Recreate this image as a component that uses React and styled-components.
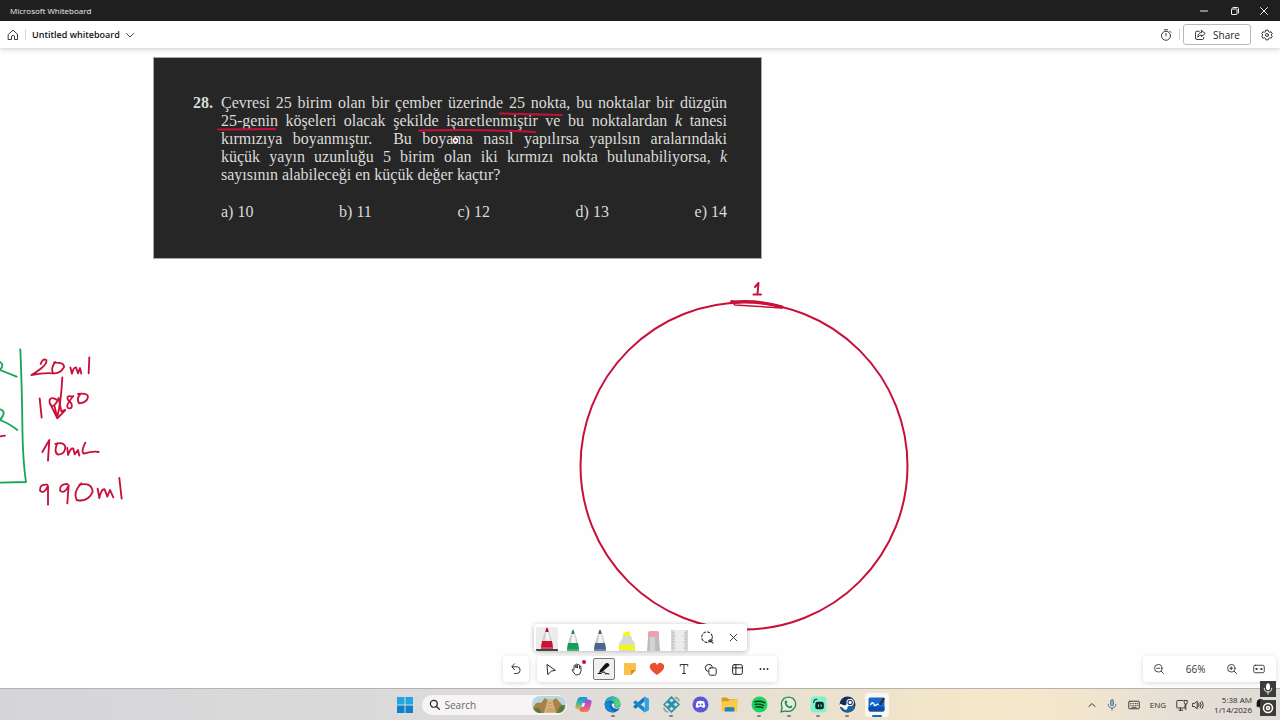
import styled, { createGlobalStyle } from "styled-components";

const GlobalStyle = createGlobalStyle`
* {
    box-sizing: border-box;
}

body {
    margin: 0;
    background-color: #fff;
    color: #242424;
    font-family: "Open Sans", "Noto Sans", sans-serif;
    font-size: 10px;
    line-height: 12px;
}

button {
    display: flex;
    align-items: center;
    justify-content: center;
    padding: 0;
    border: 0;
    background: none;
    color: inherit;
    font: inherit;
}

svg {
    display: block;
    flex-shrink: 0;
}
`

const Window = styled.div`
height: 100vh;
display: flex;
flex-direction: column;
overflow: hidden;
`

const TitleBar = styled.div`
height: 21px;
flex-shrink: 0;
padding: 0 3px 0 10px;
display: flex;
align-items: center;
justify-content: space-between;
background-color: #202020;
color: #f0f0f0;
font-size: 8px;
`

const WindowControls = styled.div`
display: flex;

    button {
        width: 31px;
        height: 21px;
    }

    button:last-child {
        width: 27px;
    }
`

const Header = styled.header`
height: 27px;
flex-shrink: 0;
padding: 0 7px;
display: flex;
align-items: center;
justify-content: space-between;
background-color: #fff;
box-shadow: 0 1px 5px rgba(0, 0, 0, 0.22);
position: relative;
z-index: 1;
`

const HeaderGroup = styled.div`
display: flex;
align-items: center;
gap: ${({ $gap }) => $gap}px;
`

const Divider = styled.span`
width: 1px;
height: 11px;
background-color: #d6d6d6;
`

const BoardName = styled.button`
gap: 6px;
color: #111;
font-size: 9px;
font-weight: 600;
`

const ShareButton = styled.button`
&& {
    width: 68px;
    height: 21px;
    gap: 7px;
    border: 1px solid #b9b9b9;
    border-radius: 3px;
}
`

const Canvas = styled.main`
flex: 1;
position: relative;
overflow: hidden;
background-color: #fefefe;
`

const Problem = styled.article`
position: absolute;
left: 153px;
top: 9px;
width: 609px;
padding: 36px 34px 37px 39px;
border: 1px solid #a8a8a8;
background-color: #262626;
color: #dcdcd8;
font-family: "Liberation Serif", serif;
font-size: 16px;
line-height: 18px;
display: flex;
`

const ProblemNumber = styled.strong`
width: 28px;
flex-shrink: 0;
`

const ProblemBody = styled.div`
flex: 1;
min-width: 0;
`

const Line = styled.div`
white-space: nowrap;
text-align-last: ${({ $last }) => ($last ? "left" : "justify")};
`

const Options = styled.div`
margin-top: 19px;
display: flex;
justify-content: space-between;
`

const Ink = styled.svg`
position: absolute;
left: 0;
top: 0;
fill: none;
stroke-linecap: round;
stroke-linejoin: round;
`

const ToolDock = styled.div`
position: absolute;
left: 0;
right: 0;
bottom: 6px;
display: flex;
flex-direction: column;
align-items: center;
gap: 5px;
pointer-events: none;
`

const DockRow = styled.div`
display: flex;
gap: 8px;
`

const Panel = styled.div`
width: ${({ $width }) => $width}px;
height: 26px;
display: flex;
align-items: center;
border-radius: 4px;
background-color: #fff;
box-shadow: 0 1px 5px rgba(0, 0, 0, 0.15);
pointer-events: auto;
`

const PenPanel = styled(Panel)`
height: 27px;
overflow: hidden;
`

const PenDock = styled.div`
border-radius: 4px;
box-shadow: 0 1px 5px rgba(0, 0, 0, 0.15);
`

const ToolButton = styled.button`
flex: 1;
height: 26px;
`

const ToolFace = styled.span`
width: 22px;
height: 22px;
display: flex;
align-items: center;
justify-content: center;
border: 1px solid ${({ $active }) => ($active ? "#777" : "transparent")};
border-radius: 2px;
background-color: ${({ $active }) => ($active ? "#f0f0f0" : "transparent")};
`

const PenButton = styled.button`
flex: 1;
height: 27px;

    && {
        align-items: flex-end;
    }
`

const PenFace = styled.span`
width: 22px;
height: 24px;
display: flex;
justify-content: center;
align-items: flex-end;
border-radius: 2px 2px 0 0;
border-bottom: ${({ $active }) => ($active ? "2px solid #444" : "0")};
background-color: ${({ $active }) => ($active ? "#ececec" : "transparent")};
`

const ZoomPanel = styled(Panel)`
position: absolute;
right: 4px;
bottom: 6px;
padding: 0 11px 0 10px;
justify-content: space-between;
color: #333;

    span {
        margin: 0 6px;
    }
`

const Taskbar = styled.footer`
height: 32px;
flex-shrink: 0;
display: grid;
grid-template-columns: 1fr auto 1fr;
align-items: center;
border-top: 1px solid #b4b3b1;
background: linear-gradient(90deg, #d5d5d8 0%, #dad9da 22%, #dddbdb 40%, #e3dfd8 52%, #ece2cd 66%, #f5e7c8 76%, #f3e6cd 84%, #e6e0d5 91%, #dfdbd6 100%);
`

const Launcher = styled.div`
grid-column: 2;
display: flex;
align-items: center;
`

const StartButton = styled.button`
width: 33px;
height: 31px;
`

const SearchBox = styled.label`
width: 145px;
height: 20px;
margin-right: 2px;
padding: 0 1px 0 7px;
display: flex;
align-items: center;
gap: 5px;
border-radius: 10px;
background-color: #f6f5f4;

    input {
        flex: 1;
        min-width: 0;
        padding: 0;
        border: 0;
        outline: 0;
        background: none;
        font: inherit;
    }

    input::placeholder {
        color: #666;
        opacity: 1;
    }
`

const AppRow = styled.div`
width: 323px;
display: flex;
`

const AppButton = styled.button`
flex: 1;
height: 31px;
position: relative;
`

const AppFace = styled.span`
width: 24px;
height: 24px;
display: flex;
align-items: center;
justify-content: center;
border-radius: 3px;
background-color: ${({ $active }) => ($active ? "#faf6f0" : "transparent")};
`

const AppMark = styled.span`
position: absolute;
bottom: 3px;
width: ${({ $active }) => ($active ? 10 : 4)}px;
height: 2px;
border-radius: 1px;
background-color: ${({ $active }) => ($active ? "#0a72b8" : "#85817c")};
`

const Tray = styled.div`
justify-self: end;
padding-right: 28px;
display: flex;
align-items: center;
gap: 10px;
color: #2a2a2a;
font-size: 8px;
line-height: 10px;
`

const TrayPair = styled.div`
display: flex;
align-items: center;
gap: 4px;
`

const Clock = styled.time`
text-align: right;
`

const Recorder = styled.div`
position: absolute;
right: 4px;
bottom: 4px;
display: flex;
flex-direction: column;
gap: 3px;
z-index: 2;
`

const RecorderButton = styled.button`
&& {
    width: 16px;
    height: 16px;
    background-color: #3c3c3c;
    color: #fff;
}
`

const Icon = ({ size = 12, box = 16, width = 1.2, children }) => (
    <svg
        width={size}
        height={size}
        viewBox={`0 0 ${box} ${box}`}
        fill="none"
        stroke="currentColor"
        strokeWidth={width}
        strokeLinecap="round"
        strokeLinejoin="round"
        aria-hidden="true"
    >
        {children}
    </svg>
)

const problemLines = [
    "Çevresi 25 birim olan bir çember üzerinde 25 nokta, bu noktalar bir düzgün",
    <>25-genin köşeleri olacak şekilde işaretlenmiştir ve bu noktalardan <i>k</i> tanesi</>,
    <>kırmızıya boyanmıştır. &nbsp;Bu boyama nasıl yapılırsa yapılsın aralarındaki</>,
    <>küçük yayın uzunluğu 5 birim olan iki kırmızı nokta bulunabiliyorsa, <i>k</i></>,
    "sayısının alabileceği en küçük değer kaçtır?",
]

const options = ["a) 10", "b) 11", "c) 12", "d) 13", "e) 14"]

const ProblemCard = () => (
    <Problem>
        <ProblemNumber>28.</ProblemNumber>
        <ProblemBody>
            {problemLines.map((line, i) => (
                <Line key={i} $last={i === problemLines.length - 1}>{line}</Line>
            ))}
            <Options>
                {options.map((option) => <span key={option}>{option}</span>)}
            </Options>
        </ProblemBody>
    </Problem>
)

const Strokes = () => (
    <Ink width="1280" height="640" viewBox="0 48 1280 640" aria-hidden="true">
        <g stroke="#c8103a" strokeWidth="2">
            <circle cx="744" cy="466" r="163.500" />
            <path d="M500 113.500L562 115" />
            <path d="M218 129.500L275 129" />
            <path d="M419 130.500Q478 129 535 132" />
            <path d="M732 302Q760 300 782 307" strokeWidth="3" />
            <path d="M732 302L735 305L782 308" strokeWidth="1.500" />
            <circle cx="732" cy="302" r="1" />
            <path d="M755 287L758.500 283L757.500 294M753.500 294.500H761" />
        </g>
        <circle cx="455.500" cy="140.500" r="2" stroke="#fff" strokeWidth="1.500" fill="#7a1022" />
        <g transform="translate(0 340) scale(0.3333)" strokeWidth="5.500">
            <g stroke="#17a558">
                <path d="M61 28Q66 150 67 250Q68 360 78 426L0 428" />
                <path d="M0 66Q14 74 0 90Q26 100 50 110" />
                <path d="M0 208Q22 214 0 240Q28 250 52 270" />
            </g>
            <g stroke="#c8103a">
                <path d="M0 289L15 287" />
                <path d="M122 72Q128 54 139 60Q144 76 94 105Q130 98 158 100" />
                <path d="M166 66Q150 86 160 100Q180 102 192 82Q194 66 162 68" />
                <path d="M211 82L216 101Q220 82 228 82L234 100L240 84L244 101" />
                <path d="M268 52L266 100" />
                <path d="M187 112Q184 180 172 232" />
                <path d="M119 175L125 233" />
                <path d="M168 178Q146 168 149 188Q156 208 168 190L176 174L184 214L196 210L172 235L150 190M164 200L172 235" />
                <path d="M217 170Q198 164 204 180Q220 190 214 204Q200 208 202 196Q206 184 220 168" />
                <path d="M240 164Q228 178 238 190Q262 188 264 170Q262 158 234 162" />
                <path d="M127 336L148 300L144 362" />
                <path d="M172 310Q160 336 174 344Q196 342 196 320Q190 304 166 312" />
                <path d="M202 324L204 345Q212 322 220 326L224 343L234 330L238 347" />
                <path d="M256 308Q242 336 252 341Q280 332 296 336" />
                <path d="M142 434Q118 432 120 452Q132 464 144 438L144 494" />
                <path d="M202 432Q178 432 180 452Q194 464 206 436L202 490" />
                <path d="M244 430Q218 456 230 480Q264 488 278 456Q276 426 238 434" />
                <path d="M293 446L298 474Q304 446 314 448L322 470L330 450L340 472" />
                <path d="M358 414L365 476" />
            </g>
        </g>
    </Ink>
)

const MarkerPen = ({ tip, band }) => (
    <svg width="14" height="22" viewBox="0 0 14 22" aria-hidden="true">
        <path d="M6 2Q7 -1 8 2L9 6H5Z" fill={tip} />
        <path d="M5 5H9Q12 11 13 22H1Q2 11 5 5Z" fill="#cdcdcd" />
        <path d="M6 5H8Q10 9 10 15H5Z" fill="#f2f2f2" />
        <path d="M2 14H12L13 20H1Z" fill={band} />
        <path d="M1 20H13V22H1Z" fill={band} opacity="0.700" />
    </svg>
)

const Highlighter = () => (
    <svg width="18" height="20" viewBox="0 0 18 20" aria-hidden="true">
        <path d="M5 2L12 0V6H5Z" fill="#f4f526" />
        <path d="M5 5H13L15 10Q18 11 17 20H1Q0 11 3 10Z" fill="#d9d9d9" />
        <path d="M1 14H17V19H1Z" fill="#f0f818" />
    </svg>
)

const Eraser = () => (
    <svg width="13" height="20" viewBox="0 0 13 20" aria-hidden="true">
        <rect x="1" y="0" width="11" height="9" rx="2" fill="#eda1b0" />
        <path d="M1 6H12L13 20H0Z" fill="#bdbdbd" />
        <path d="M3 6H8V20H3Z" fill="#d4d4d4" />
    </svg>
)

const Ruler = () => (
    <svg width="17" height="21" viewBox="0 0 17 21" aria-hidden="true">
        <path d="M0 0H17V21H0Z" fill="#d6d6d6" />
        <path d="M3 0H14V21H3Z" fill="#ececec" />
        <path d="M1 3H4M1 6H5M1 9H4M1 12H5M1 15H4M1 18H5M13 3H16M12 6H16M13 9H16M12 12H16M13 15H16M12 18H16" stroke="#b2b2b2" strokeWidth="0.700" />
    </svg>
)

const pens = [
    { label: "Red pen", active: true, icon: <MarkerPen tip="#b50d2d" band="#d01033" /> },
    { label: "Green pen", icon: <MarkerPen tip="#178c56" band="#189a58" /> },
    { label: "Galaxy pen", icon: <MarkerPen tip="#4a5b74" band="#49678c" /> },
    { label: "Highlighter", icon: <Highlighter /> },
    { label: "Eraser", icon: <Eraser /> },
    { label: "Ruler", icon: <Ruler /> },
]

const tools = [
    { label: "Select", icon: <Icon size={13}><path d="M4 2L14 9L9 10L5 14Z" /></Icon> },
    {
        label: "Pan",
        icon: (
            <svg width="22" height="22" viewBox="0 0 22 22" fill="none" stroke="#333" strokeLinecap="round" strokeLinejoin="round" aria-hidden="true">
                <path d="M8 11V8Q8 7 9 7Q10 7 10 8V10V6.500Q10.500 5.500 11.500 6.500V10V7Q12.500 6 13.500 7V10.500V8.500Q15 7.500 15 9V13Q14.500 17 11 17Q9 17 8 15L6 12Q6 10.500 8 12" />
                <circle cx="18" cy="4" r="2" fill="#c50f3c" stroke="none" />
            </svg>
        ),
    },
    {
        label: "Ink",
        active: true,
        icon: (
            <svg width="14" height="14" viewBox="0 0 14 14" aria-hidden="true">
                <path d="M8 2Q10 0 12 2Q13 3 12 4L5 10L2 11L3 8Z" fill="#111" />
                <path d="M1 11.500H4Q8 8.500 8 11Q8 13 10 11.500L12 12" fill="none" stroke="#111" strokeLinecap="round" />
            </svg>
        ),
    },
    {
        label: "Notes",
        icon: (
            <svg width="14" height="14" viewBox="0 0 14 14" aria-hidden="true">
                <path d="M2 1H12Q13 1 13 2V8L8 13H2Q1 13 1 12V2Q1 1 2 1Z" fill="#f8c14c" />
                <path d="M8 13V9Q8 8 9 8H13Z" fill="#e08a1e" />
            </svg>
        ),
    },
    {
        label: "Reactions",
        icon: (
            <svg width="16" height="14" viewBox="0 0 16 14" aria-hidden="true">
                <path d="M8 3Q10 0 12 1Q16 2 15 6Q14 9 8 13Q2 9 1 6Q0 2 4 1Q7 0 8 3Z" fill="#e8512f" />
            </svg>
        ),
    },
    { label: "Text", icon: <Icon><path d="M3 4V2H13V4M8 2V14M6 14H10" /></Icon> },
    { label: "Shapes", icon: <Icon size={13}><path d="M5 10.500A4.500 4.500 0 1 1 10.500 5" /><rect x="6" y="6" width="9" height="9" rx="2" /></Icon> },
    { label: "Templates", icon: <Icon size={13}><rect x="2" y="2" width="12" height="12" rx="2" /><path d="M6 2V14M6 6H14M2 6H6" /></Icon> },
    {
        label: "More",
        icon: <svg width="10" height="4" viewBox="0 0 10 4" fill="#333" aria-hidden="true"><circle cx="1.500" cy="2" r="1" /><circle cx="5" cy="2" r="1" /><circle cx="8.500" cy="2" r="1" /></svg>,
    },
]

const Dock = () => (
    <ToolDock>
        <PenDock>
            <PenPanel $width={213}>
                {pens.map(({ label, active, icon }) => (
                    <PenButton key={label} aria-label={label}><PenFace $active={active}>{icon}</PenFace></PenButton>
                ))}
                <ToolButton aria-label="Lasso select">
                    <Icon size={14}>
                        <circle cx="8" cy="7" r="6" strokeDasharray="2.500 2.200" />
                        <path d="M10 11Q12 9 14 11Q13 13 11 12M13 12L15 14" />
                    </Icon>
                </ToolButton>
                <ToolButton aria-label="Close"><Icon size={9} width={1.6}><path d="M2 2L14 14M14 2L2 14" /></Icon></ToolButton>
            </PenPanel>
        </PenDock>
        <DockRow>
            <Panel $width={26}>
                <ToolButton aria-label="Undo"><Icon><path d="M6 1L2.500 5L6 9M3 5H9.500Q13.500 5 13.500 9.500Q13.500 14 9 14H6" /></Icon></ToolButton>
            </Panel>
            <Panel $width={240}>
                {tools.map(({ label, active, icon }) => (
                    <ToolButton key={label} aria-label={label}><ToolFace $active={active}>{icon}</ToolFace></ToolButton>
                ))}
            </Panel>
        </DockRow>
    </ToolDock>
)

const ZoomControls = () => (
    <ZoomPanel $width={133}>
        <button aria-label="Zoom out"><Icon><circle cx="7" cy="7" r="5" /><path d="M5 7H9M11 11L14 14" /></Icon></button>
        <span>66%</span>
        <button aria-label="Zoom in"><Icon><circle cx="7" cy="7" r="5" /><path d="M5 7H9M7 5V9M11 11L14 14" /></Icon></button>
        <button aria-label="Fit to screen"><Icon><rect x="1" y="3" width="14" height="10" rx="2" /><path d="M4 8H6.500M4 8L5 7M4 8L5 9M12 8H9.500M12 8L11 7M12 8L11 9" /></Icon></button>
    </ZoomPanel>
)

const AppIcon = ({ children }) => (
    <svg width="17" height="17" viewBox="0 0 32 32" fill="none" aria-hidden="true">{children}</svg>
)

const apps = [
    {
        name: "Copilot",
        icon: (
            <AppIcon>
                <defs>
                    <linearGradient id="copilotLeft" x1="0" y1="0" x2="0" y2="1">
                        <stop offset="0" stopColor="#1c8de8" /><stop offset="0.500" stopColor="#38b7a0" /><stop offset="1" stopColor="#f0b429" />
                    </linearGradient>
                    <linearGradient id="copilotRight" x1="0" y1="0" x2="0" y2="1">
                        <stop offset="0" stopColor="#8a52e8" /><stop offset="0.600" stopColor="#e0559a" /><stop offset="1" stopColor="#f5804a" />
                    </linearGradient>
                </defs>
                <path d="M10 2H20Q23 2 24 6L22 10Q18 9 17 13L15 21Q14 25 10 25H5Q0 25 1 19L4 8Q6 2 10 2Z" fill="url(#copilotLeft)" />
                <path d="M22 30H12Q9 30 8 26L10 22Q14 23 15 19L17 11Q18 7 22 7H27Q32 7 31 13L28 24Q26 30 22 30Z" fill="url(#copilotRight)" />
                <path d="M14 13H19L17 20H12Z" fill="#f4eee8" />
            </AppIcon>
        ),
    },
    {
        name: "Edge",
        running: true,
        icon: (
            <AppIcon>
                <defs>
                    <linearGradient id="edgeTop" x1="0" y1="0" x2="1" y2="0.300">
                        <stop offset="0" stopColor="#189be0" /><stop offset="1" stopColor="#5bd667" />
                    </linearGradient>
                </defs>
                <circle cx="16" cy="16" r="15" fill="#1268b8" />
                <path d="M1 15Q3 1 17 1Q30 2 31 14Q30 21 23 21Q18 21 20 17Q19 9 12 9Q5 9 1 15Z" fill="url(#edgeTop)" />
                <path d="M15 14Q19 13 20 17Q17 21 23 22Q28 23 31 19L29 23Q18 26 15 19Q14 16 15 14Z" fill="#e6f2f8" />
                <path d="M2 16Q6 9 13 12Q9 17 13 24Q16 29 22 30Q7 33 2 21Z" fill="#1588cf" />
            </AppIcon>
        ),
    },
    {
        name: "Visual Studio Code",
        icon: (
            <AppIcon>
                <path d="M22 1V10L5 24L1 21V19L22 1Z" fill="#1278be" />
                <path d="M22 31V22L5 8L1 11V13L22 31Z" fill="#1788cc" />
                <path d="M22 1L30 5V27L22 31Z" fill="#2fa3e4" />
            </AppIcon>
        ),
    },
    {
        name: "Shell",
        running: true,
        icon: (
            <AppIcon>
                <g stroke="#2b93ad" strokeWidth="3">
                    <path d="M16 2L22 8L16 14L10 8ZM8 10L14 16L8 22L2 16ZM24 10L30 16L24 22L18 16ZM16 18L22 24L16 30L10 24Z" />
                </g>
                <path d="M22 3Q30 3 30 10M2 22Q2 29 10 30" stroke="#9b9ca0" strokeWidth="3" />
            </AppIcon>
        ),
    },
    {
        name: "Discord",
        icon: (
            <AppIcon>
                <circle cx="16" cy="16" r="15" fill="#5a58d6" />
                <path d="M7 20Q7 13 10 10Q16 8 22 10Q25 13 25 20Q22 23 20 22L19 20H13L12 22Q10 23 7 20Z" fill="#fff" />
                <circle cx="13" cy="16" r="2" fill="#5a58d6" /><circle cx="19" cy="16" r="2" fill="#5a58d6" />
            </AppIcon>
        ),
    },
    {
        name: "File Explorer",
        icon: (
            <AppIcon>
                <path d="M1 5Q1 3 3 3H11L14 6H29Q31 6 31 8V12H1Z" fill="#d99b17" />
                <path d="M1 10H14L17 7H31V27Q31 29 29 29H3Q1 29 1 27Z" fill="#fbcb45" />
                <path d="M7 29V23Q7 21 9 21H23Q25 21 25 23V29Z" fill="#1c84c7" />
            </AppIcon>
        ),
    },
    {
        name: "Spotify",
        running: true,
        icon: (
            <AppIcon>
                <circle cx="16" cy="16" r="15" fill="#1ed45f" />
                <path d="M7 11Q17 8 26 13M8 16Q16 14 24 18M9 21Q16 19 22 22" stroke="#0e3a1e" strokeWidth="2.500" strokeLinecap="round" />
            </AppIcon>
        ),
    },
    {
        name: "WhatsApp",
        running: true,
        icon: (
            <AppIcon>
                <path d="M2 30L4 22Q0 12 7 5Q16 -1 25 5Q32 12 28 21Q21 32 10 28Z" fill="#e6eadf" stroke="#238a55" strokeWidth="2.500" />
                <path d="M10 9Q12 7 13 10L14 12L12 14Q14 18 18 20L20 18L23 19Q24 22 20 23Q12 23 9 14Q8 11 10 9Z" fill="#238a55" />
            </AppIcon>
        ),
    },
    {
        name: "Streamlabs",
        running: true,
        icon: (
            <AppIcon>
                <rect x="1" y="1" width="30" height="30" rx="7" fill="#7df3d0" />
                <path d="M7 12Q7 6 13 6" stroke="#102420" strokeWidth="2" strokeLinecap="round" />
                <rect x="10" y="11" width="16" height="14" rx="4" fill="#102420" />
                <path d="M16 16V20M21 16V20" stroke="#7df3d0" strokeWidth="2" />
            </AppIcon>
        ),
    },
    {
        name: "Steam",
        running: true,
        icon: (
            <AppIcon>
                <circle cx="16" cy="16" r="15" fill="#132c5c" />
                <path d="M2 20Q6 31 17 31Q28 30 31 18Z" fill="#1c65a0" />
                <path d="M1 17L12 21L17 16" stroke="#fff" strokeWidth="5" />
                <circle cx="21" cy="12" r="6" fill="#132c5c" stroke="#fff" strokeWidth="2" />
                <circle cx="21" cy="12" r="3" fill="#fff" />
                <circle cx="12" cy="22" r="4" fill="#fff" />
            </AppIcon>
        ),
    },
    {
        name: "Whiteboard",
        running: true,
        active: true,
        icon: (
            <AppIcon>
                <rect x="1" y="3" width="30" height="26" rx="3" fill="#1269d3" />
                <path d="M1 20H31V26Q31 29 28 29H4Q1 29 1 26Z" fill="#0d4da8" />
                <path d="M5 16Q9 10 11 15Q12 20 15 17Q18 14 21 16" stroke="#fff" strokeWidth="2.500" strokeLinecap="round" />
                <path d="M20 16L29 3L32 5L24 18Z" fill="#2a2f38" />
            </AppIcon>
        ),
    },
]

const Landmark = () => (
    <svg width="34" height="17" viewBox="0 0 34 17" aria-hidden="true">
        <rect width="34" height="17" rx="8" fill="#b8d8dc" />
        <path d="M1 12Q4 5 9 7L13 2L18 6L24 2L33 12Q30 17 26 17H8Q3 17 1 12Z" fill="#a88048" />
        <path d="M12 17L16 3H20L24 17Z" fill="#d9b785" />
        <path d="M15 13H22M15 10H21M16 7H20M14 15H23" stroke="#b8925c" />
        <path d="M2 13Q6 10 10 17H8Q4 17 2 13ZM25 17Q27 8 33 9Q33 16 26 17Z" fill="#4d7f3b" />
    </svg>
)

const MicIcon = ({ size = 12, fill = "none" }) => (
    <Icon size={size}>
        <rect x="6" y="1" width="4" height="8" rx="2" fill={fill} />
        <path d="M3 7Q3 12 8 12Q13 12 13 7M8 12V15" />
    </Icon>
)

const TrayMic = styled.button`
&& {
    color: #4a6a94;
}
`

const SystemTray = () => (
    <Tray>
        <button aria-label="Hidden icons"><Icon size={8} width={2}><path d="M2 11L8 5L14 11" /></Icon></button>
        <TrayMic aria-label="Microphone"><MicIcon fill="#8db3dd" /></TrayMic>
        <button aria-label="Touch keyboard">
            <Icon><rect x="1" y="3" width="14" height="10" rx="1" /><path d="M3.500 6H4M6.500 6H7M9.500 6H10M12 6H12.500M3.500 8.500H4M6.500 8.500H7M9.500 8.500H10M12 8.500H12.500M5 11H11" /></Icon>
        </button>
        <span>ENG</span>
        <TrayPair>
            <Icon><path d="M9 2H2Q1 2 1 3V11Q1 12 2 12H12V8M6 12V15M4 15H9" /><path d="M11 2H15V5Q15 7 13 7Q11 7 11 5ZM13 7V14" /></Icon>
            <Icon><path d="M1 6H3L7 3V13L3 10H1ZM9 6Q10 8 9 10M11 4.500Q13.500 8 11 11.500M13 3Q17 8 13 13" /></Icon>
        </TrayPair>
        <Clock>5:38 AM<br />1/14/2026</Clock>
    </Tray>
)

const Bell = styled.span`
position: absolute;
right: 14px;
bottom: 11px;
color: #111;
z-index: 1;
`

const App = () => (
    <Window>
        <GlobalStyle />
        <TitleBar>
            <span>Microsoft Whiteboard</span>
            <WindowControls>
                <button aria-label="Minimize"><Icon size={8} width={2}><path d="M1 8H15" /></Icon></button>
                <button aria-label="Restore"><Icon size={8} width={2}><rect x="1" y="4" width="11" height="11" rx="1" /><path d="M4 1H13Q15 1 15 3V12" /></Icon></button>
                <button aria-label="Close window"><Icon size={8} width={2}><path d="M1 1L15 15M15 1L1 15" /></Icon></button>
            </WindowControls>
        </TitleBar>
        <Header>
            <HeaderGroup $gap={6}>
                <button aria-label="Home"><Icon><path d="M2 7L8 1.500L14 7V14H10V9.500Q8 7.500 6 9.500V14H2Z" /></Icon></button>
                <Divider />
                <BoardName>
                    Untitled whiteboard
                    <Icon size={8} width={1.6}><path d="M1 5L8 12L15 5" /></Icon>
                </BoardName>
            </HeaderGroup>
            <HeaderGroup $gap={3}>
                <HeaderGroup $gap={7}>
                    <button aria-label="Timer"><Icon><circle cx="8" cy="9" r="6" /><path d="M6 1H10M8 6V9M13 3L14.500 4.500" /></Icon></button>
                    <Divider />
                </HeaderGroup>
                <HeaderGroup $gap={10}>
                    <ShareButton>
                        <Icon><path d="M7 3H4Q2 3 2 5V12Q2 14 4 14H11Q13 14 13 12V11" /><path d="M10 2L15 6L10 10V8Q7 8 5 11Q5 5 10 4.500Z" /></Icon>
                        Share
                    </ShareButton>
                    <button aria-label="Settings">
                        <Icon>
                            <circle cx="8" cy="8" r="2" />
                            <path d="M6.500 1.500H9.500L10 3.500L11.500 4.300L13.500 3.700L15 6.300L13.500 8L15 9.700L13.500 12.300L11.500 11.700L10 12.500L9.500 14.500H6.500L6 12.500L4.500 11.700L2.500 12.300L1 9.700L2.500 8L1 6.300L2.500 3.700L4.500 4.300L6 3.500Z" />
                        </Icon>
                    </button>
                </HeaderGroup>
            </HeaderGroup>
        </Header>
        <Canvas>
            <ProblemCard />
            <Strokes />
            <Dock />
            <ZoomControls />
        </Canvas>
        <Taskbar>
            <Launcher>
                <StartButton aria-label="Start">
                    <svg width="16" height="16" viewBox="0 0 16 16" aria-hidden="true">
                        <path d="M0 0H7.500V7.500H0ZM8.500 0H16V7.500H8.500Z" fill="#22a5e4" />
                        <path d="M0 8.500H7.500V16H0ZM8.500 8.500H16V16H8.500Z" fill="#0a82cd" />
                    </svg>
                </StartButton>
                <SearchBox>
                    <Icon size={11} width={1.8}><circle cx="7" cy="7" r="5" /><path d="M11 11L15 15" /></Icon>
                    <input type="search" aria-label="Search" placeholder="Search" />
                    <Landmark />
                </SearchBox>
                <AppRow>
                    {apps.map(({ name, icon, running, active }) => (
                        <AppButton key={name} aria-label={name}>
                            <AppFace $active={active}>{icon}</AppFace>
                            {running && <AppMark $active={active} />}
                        </AppButton>
                    ))}
                </AppRow>
            </Launcher>
            <SystemTray />
        </Taskbar>
        <Bell><Icon size={11}><path d="M3 12V7Q3 2 8 2Q13 2 13 7V12ZM7 14H9" fill="currentColor" /></Icon></Bell>
        <Recorder>
            <RecorderButton aria-label="Mute"><MicIcon fill="#fff" /></RecorderButton>
            <RecorderButton aria-label="Camera"><Icon width={2}><circle cx="8" cy="8" r="6" /><circle cx="8" cy="8" r="2" /></Icon></RecorderButton>
        </Recorder>
    </Window>
)

export default App
